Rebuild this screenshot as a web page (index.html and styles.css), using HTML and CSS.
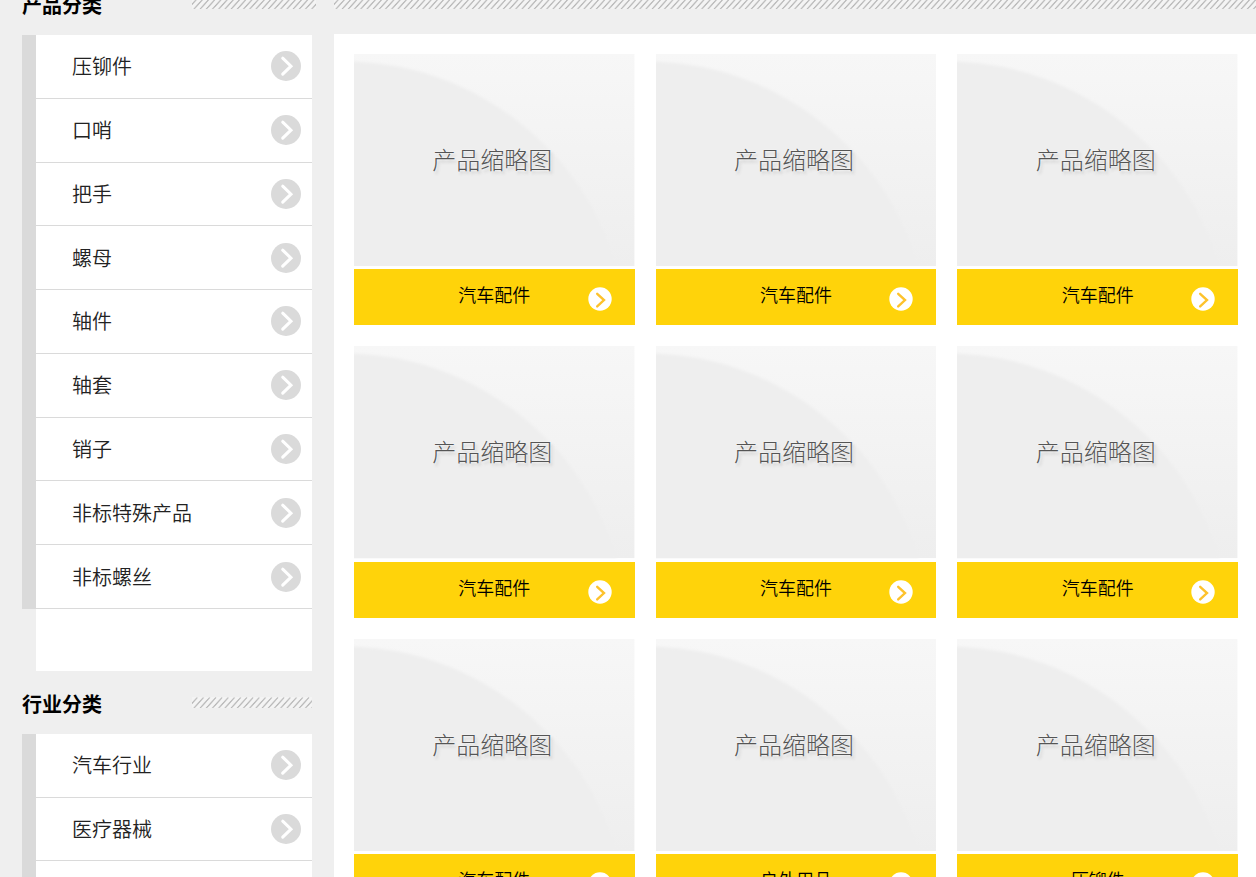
FILE: index.html
```html
<!DOCTYPE html>
<html lang="zh-CN">
<head>
<meta charset="utf-8">
<meta name="viewport" content="width=device-width, initial-scale=1">
<title>产品分类</title>
<link rel="stylesheet" href="styles.css">
</head>
<body>
<svg class="defs" aria-hidden="true">
  <defs>
    <pattern id="hatch" width="6.2" height="12" patternUnits="userSpaceOnUse">
      <rect width="7" height="12" fill="#f4f4f4"/>
      <path d="M-10.9 11.5L-.9 .5M-4.7 11.5L5.3 .5M1.5 11.5L11.5 .5" stroke="#b0b0b0" stroke-width="1.1"/>
    </pattern>
    <linearGradient id="sky" x1="0" y1="0" x2="0" y2="1">
      <stop offset="0" stop-color="#f7f7f7"/>
      <stop offset="1" stop-color="#eeeeee"/>
    </linearGradient>
    <filter id="soft" x="-5%" y="-5%" width="110%" height="110%">
      <feGaussianBlur stdDeviation="1.5"/>
    </filter>
    <symbol id="go" viewBox="0 0 30 30">
      <circle cx="15" cy="15" r="15" fill="#dadada"/>
      <path d="M11.7 7.2l8.3 8-8.3 8" fill="none" stroke="#fff" stroke-width="3" stroke-linecap="round"/>
    </symbol>
    <symbol id="more" viewBox="0 0 24 24">
      <circle cx="12" cy="12" r="11.7" fill="#fff"/>
      <path d="M9.2 6.8l6.8 6.3-6.8 6.3" fill="none" stroke="#fdc22c" stroke-width="2.4" stroke-linecap="round"/>
    </symbol>
    <symbol id="thumb" viewBox="0 0 281 212" preserveAspectRatio="none">
      <rect width="281" height="212" fill="url(#sky)"/>
      <path d="M-20 7.5H0A285 285 0 0 1 263 212V232H-20z" fill="#eeeeee" filter="url(#soft)"/>
    </symbol>
  </defs>
</svg>
<div class="page">
  <aside class="sidebar">
    <section>
      <div class="heading"><h2>产品分类</h2><svg class="hatch long"><rect width="100%" height="11" fill="url(#hatch)"/></svg></div>
      <nav class="box" aria-label="产品分类">
        <ul class="menu">
          <li><a href="#"><span>压铆件</span><svg><use href="#go"/></svg></a></li>
          <li><a href="#"><span>口哨</span><svg><use href="#go"/></svg></a></li>
          <li><a href="#"><span>把手</span><svg><use href="#go"/></svg></a></li>
          <li><a href="#"><span>螺母</span><svg><use href="#go"/></svg></a></li>
          <li><a href="#"><span>轴件</span><svg><use href="#go"/></svg></a></li>
          <li><a href="#"><span>轴套</span><svg><use href="#go"/></svg></a></li>
          <li><a href="#"><span>销子</span><svg><use href="#go"/></svg></a></li>
          <li><a href="#"><span>非标特殊产品</span><svg><use href="#go"/></svg></a></li>
          <li><a href="#"><span>非标螺丝</span><svg><use href="#go"/></svg></a></li>
        </ul>
      </nav>
    </section>
    <section>
      <div class="heading"><h2>行业分类</h2><svg class="hatch"><rect width="100%" height="11" fill="url(#hatch)"/></svg></div>
      <nav class="box" aria-label="行业分类">
        <ul class="menu short">
          <li><a href="#"><span>汽车行业</span><svg><use href="#go"/></svg></a></li>
          <li><a href="#"><span>医疗器械</span><svg><use href="#go"/></svg></a></li>
          <li></li>
        </ul>
      </nav>
    </section>
  </aside>
  <main class="content">
    <div class="heading wide"><svg class="hatch"><rect width="100%" height="11" fill="url(#hatch)"/></svg></div>
    <div class="products">
      <a class="card" href="#"><span class="thumb"><svg><use href="#thumb"/></svg><span>产品缩略图</span></span><span class="label"><span>汽车配件</span><svg><use href="#more"/></svg></span></a>
      <a class="card" href="#"><span class="thumb"><svg><use href="#thumb"/></svg><span>产品缩略图</span></span><span class="label"><span>汽车配件</span><svg><use href="#more"/></svg></span></a>
      <a class="card" href="#"><span class="thumb"><svg><use href="#thumb"/></svg><span>产品缩略图</span></span><span class="label"><span>汽车配件</span><svg><use href="#more"/></svg></span></a>
      <a class="card" href="#"><span class="thumb"><svg><use href="#thumb"/></svg><span>产品缩略图</span></span><span class="label"><span>汽车配件</span><svg><use href="#more"/></svg></span></a>
      <a class="card" href="#"><span class="thumb"><svg><use href="#thumb"/></svg><span>产品缩略图</span></span><span class="label"><span>汽车配件</span><svg><use href="#more"/></svg></span></a>
      <a class="card" href="#"><span class="thumb"><svg><use href="#thumb"/></svg><span>产品缩略图</span></span><span class="label"><span>汽车配件</span><svg><use href="#more"/></svg></span></a>
      <a class="card" href="#"><span class="thumb"><svg><use href="#thumb"/></svg><span>产品缩略图</span></span><span class="label"><span>汽车配件</span><svg><use href="#more"/></svg></span></a>
      <a class="card" href="#"><span class="thumb"><svg><use href="#thumb"/></svg><span>产品缩略图</span></span><span class="label"><span>户外用品</span><svg><use href="#more"/></svg></span></a>
      <a class="card" href="#"><span class="thumb"><svg><use href="#thumb"/></svg><span>产品缩略图</span></span><span class="label"><span>压铆件</span><svg><use href="#more"/></svg></span></a>
    </div>
  </main>
</div>
</body>
</html>
```

FILE: styles.css
```css
* { box-sizing: border-box; }

body {
  margin: 0;
  height: 100vh;
  overflow: hidden;
  background: #efefef;
  color: #000;
  font-family: "Liberation Sans", "Noto Sans CJK SC", sans-serif;
}

a { color: inherit; text-decoration: none; }

.defs { position: absolute; width: 0; height: 0; }

.page {
  display: grid;
  grid-template-columns: 290px 1fr;
  column-gap: 22px;
  margin-top: -28px;
  padding-left: 22px;
}

.heading {
  display: grid;
  grid-template-columns: 170px 1fr;
  align-items: center;
  height: 63px;
}

.heading h2 {
  margin: 0;
  padding-top: 4px;
  font-size: 20px;
  line-height: 30px;
}

.hatch { display: block; width: 100%; height: 11px; }

.hatch.long { width: 124px; }

.heading.wide { grid-template-columns: 1fr; height: 62px; }

.box {
  padding-bottom: 62px;
  background: linear-gradient(to right, transparent 14px, #fff 14px);
}

.menu {
  display: grid;
  grid-auto-rows: 1fr;
  min-height: 574px;
  margin: 0;
  padding: 0;
  border-left: 14px solid #dadada;
  list-style: none;
}

.menu.short { min-height: 191px; }

.menu li { border-bottom: 1px solid #dadada; }

.menu a {
  display: flex;
  align-items: center;
  justify-content: space-between;
  height: 100%;
  padding: 0 11px 0 36px;
  color: #222;
  font-size: 20px;
  font-weight: 350;
  line-height: 30px;
}

.menu span { padding-top: 2px; }

.menu svg { width: 30px; height: 30px; }

.products {
  display: grid;
  grid-template-columns: repeat(3, 1fr);
  gap: 21px;
  padding: 20px 18px 20px 20px;
  background: #fff;
}

.card { display: grid; row-gap: 3px; }

.thumb {
  display: grid;
  place-items: center;
  aspect-ratio: 119 / 90;
}

.thumb > * { grid-area: 1 / 1; }

.thumb svg { width: 100%; height: 100%; }

.thumb span {
  padding: 2px 4px 0 0;
  color: #555;
  font-size: 24px;
  font-weight: 300;
  line-height: 32px;
  text-shadow: 0 0 2px #fff, 2px 3px 3px #d0d0d0;
}

.label {
  display: grid;
  grid-template-columns: 1fr auto 1fr;
  align-items: center;
  height: 56px;
  padding: 4px 23px 0;
  background: #ffd30a;
  font-size: 18px;
  font-weight: 350;
  line-height: 24px;
}

.label span { grid-column: 2; padding-bottom: 6px; }

.label svg { width: 24px; height: 24px; justify-self: end; }
```
